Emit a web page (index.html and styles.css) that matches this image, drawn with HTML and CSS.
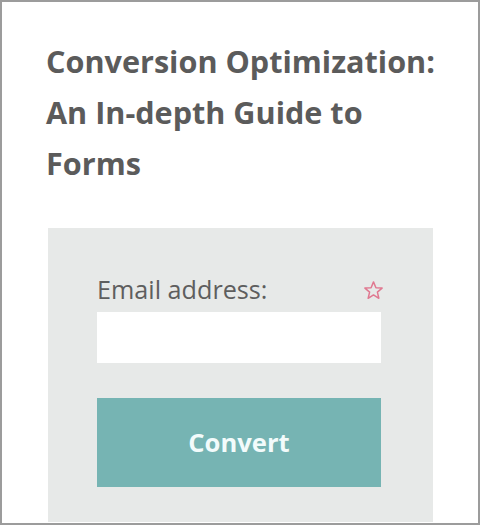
FILE: index.html
```html
<!DOCTYPE html>
<html>
<head>
<meta charset="utf-8">
<link rel="stylesheet" href="styles.css">
</head>
<body>
<div class="frame">
  <h1 class="title">Conversion Optimization: An In-depth Guide to Forms</h1>
  <div class="form-box">
    <div class="label-row">
      <label class="label" for="email">Email address:</label>
      <svg class="star" width="21" height="21" viewBox="0 0 20 20">
        <polygon points="10,1.8 12.3,7.3 18.2,7.7 13.7,11.5 15.1,17.4 10,14.2 4.9,17.4 6.3,11.5 1.8,7.7 7.7,7.3" fill="none" stroke="#e07890" stroke-width="1.4" stroke-linejoin="round"/>
      </svg>
    </div>
    <input class="input" id="email" type="text">
    <button class="button">Convert</button>
  </div>
</div>
</body>
</html>
```

FILE: styles.css
```css
html, body {
  margin: 0;
  padding: 0;
  background: #ffffff;
}
.frame {
  box-sizing: border-box;
  width: 480px;
  height: 525px;
  border: 2px solid #9c9c9c;
  padding: 0 28px 0 44px;
  font-family: "Open Sans", "Liberation Sans", sans-serif;
  overflow: hidden;
}
.title {
  margin: 34px 0 0 0;
  font-size: 30.6px;
  line-height: 51px;
  font-weight: 700;
  color: #5b5b5b;
}
.form-box {
  box-sizing: border-box;
  width: 385px;
  margin: 39px 0 0 2px;
  background: #e7e9e8;
  padding: 46px 52px 35px 49px;
}
.label-row {
  display: flex;
  align-items: center;
  justify-content: space-between;
  height: 30px;
}
.label {
  font-size: 25.2px;
  line-height: 30px;
  color: #5e5e5e;
}
.star {
  display: block;
  margin-right: -3px;
  margin-top: 2px;
}
.input {
  display: block;
  box-sizing: border-box;
  width: 284px;
  height: 51px;
  margin-top: 8px;
  border: none;
  background: #ffffff;
  padding: 0;
}
.button {
  display: block;
  box-sizing: border-box;
  width: 284px;
  height: 89px;
  margin-top: 35px;
  border: none;
  background: #76b4b3;
  color: #f2fbfb;
  font-family: "Open Sans", "Liberation Sans", sans-serif;
  font-size: 25.6px;
  font-weight: 700;
  padding: 0;
}
```
